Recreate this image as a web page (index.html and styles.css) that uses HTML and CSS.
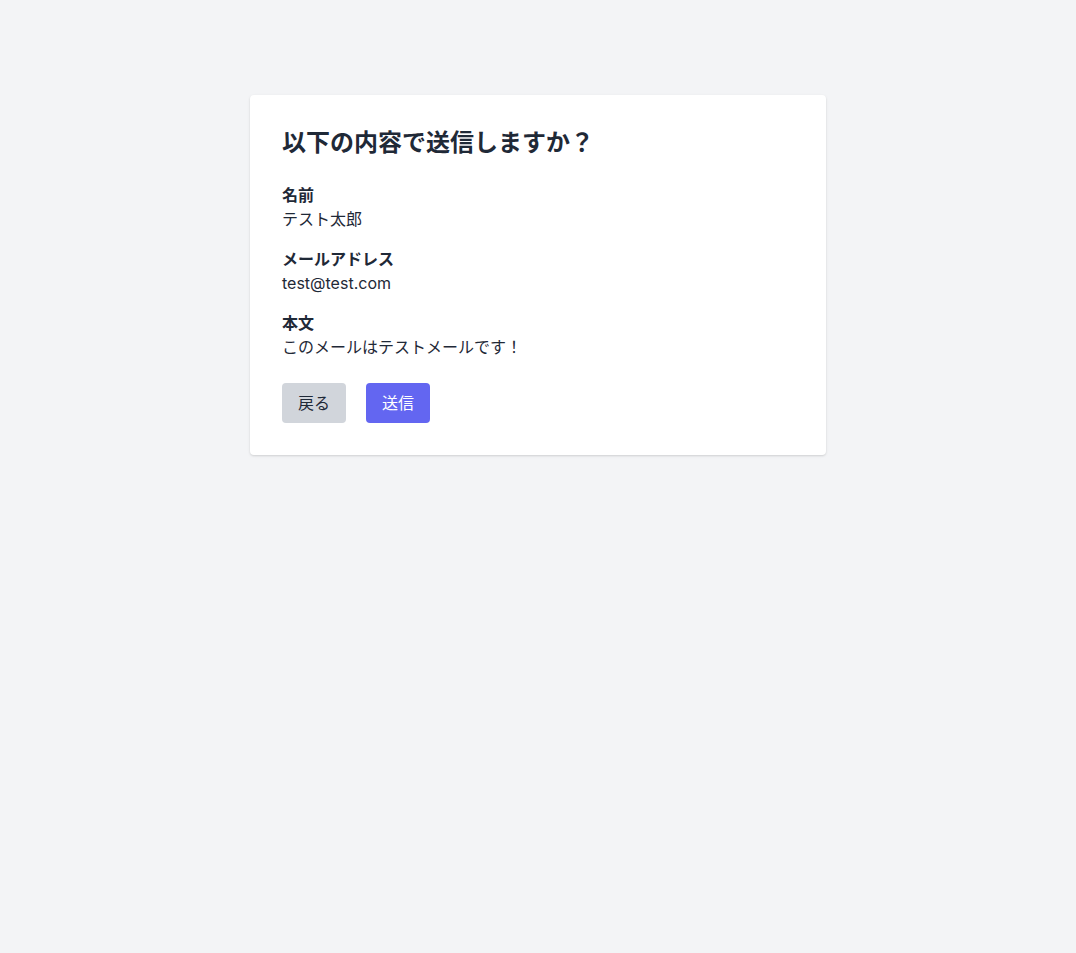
FILE: index.html
```html
<!DOCTYPE html>
<html lang="ja">
<head>
<meta charset="utf-8">
<title>確認</title>
<link rel="stylesheet" href="styles.css">
</head>
<body>
<main class="page">
  <section class="card">
    <h1 class="title">以下の内容で送信しますか？</h1>
    <div class="field">
      <div class="label">名前</div>
      <div class="value">テスト太郎</div>
    </div>
    <div class="field">
      <div class="label">メールアドレス</div>
      <div class="value">test@test.com</div>
    </div>
    <div class="field">
      <div class="label">本文</div>
      <div class="value">このメールはテストメールです！</div>
    </div>
    <div class="actions">
      <button class="btn btn-back" type="button">戻る</button>
      <button class="btn btn-send" type="submit">送信</button>
    </div>
  </section>
</main>
</body>
</html>
```

FILE: styles.css
```css
html, body {
  margin: 0;
  padding: 0;
}
body {
  background: #f3f4f6;
  color: #1f2937;
  font-family: Inter, "Noto Sans CJK JP", sans-serif;
  font-size: 16px;
  line-height: 24px;
  min-height: 953px;
}
.page {
  padding-top: 95px;
}
.card {
  width: 576px;
  box-sizing: border-box;
  margin: 0 auto;
  background: #ffffff;
  border-radius: 4px;
  padding: 32px;
  box-shadow: 0 1px 3px rgba(0,0,0,0.1), 0 1px 2px rgba(0,0,0,0.06);
}
.title {
  margin: 0 0 24px;
  font-size: 24px;
  line-height: 32px;
  font-weight: 700;
}
.field {
  margin-bottom: 16px;
}
.field:last-of-type {
  margin-bottom: 0;
}
.label {
  font-weight: 700;
}
.actions {
  margin-top: 24px;
  display: flex;
  gap: 20px;
}
.btn {
  border: 0;
  border-radius: 4px;
  padding: 8px 16px;
  font: inherit;
  font-size: 16px;
  line-height: 24px;
  cursor: pointer;
}
.btn-back {
  background: #d1d5db;
  color: #1f2937;
}
.btn-send {
  background: #6366f1;
  color: #ffffff;
}
```
